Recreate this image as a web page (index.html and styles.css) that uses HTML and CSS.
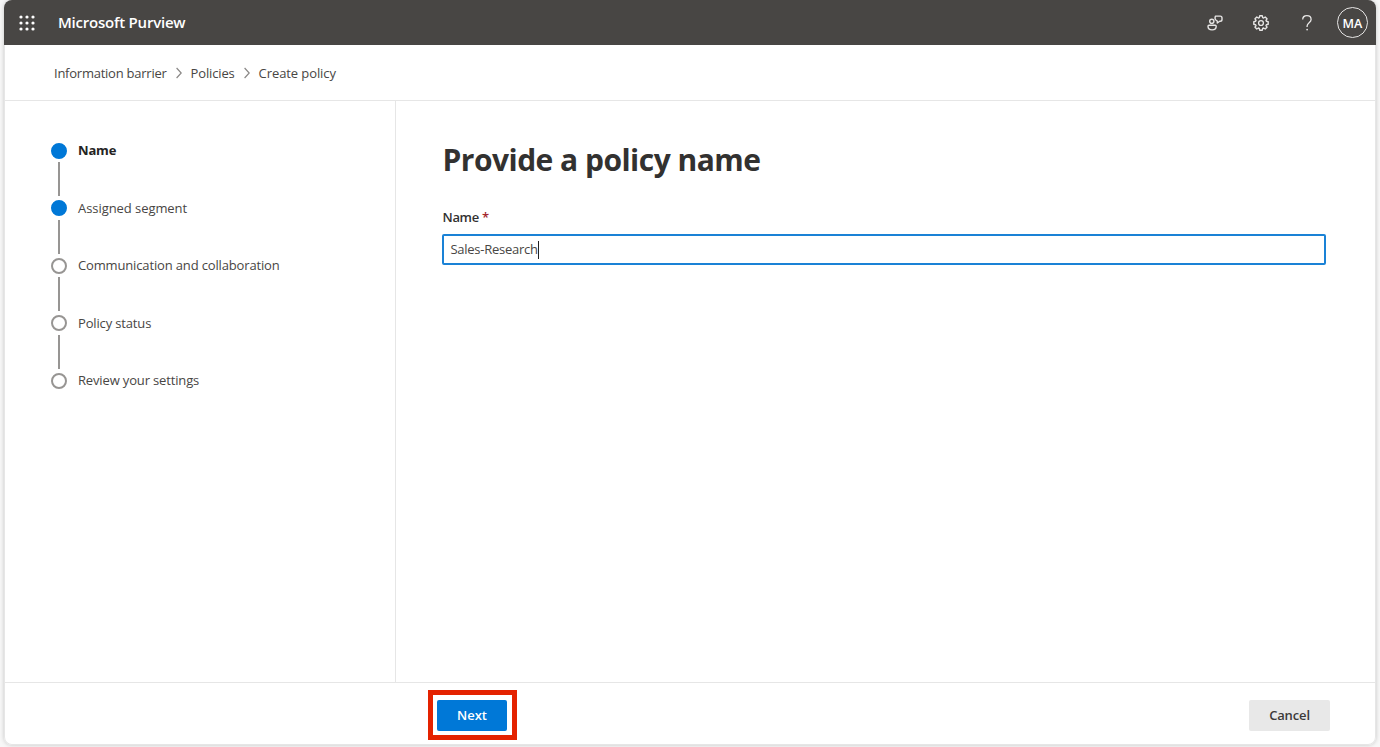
FILE: index.html
```html
<!DOCTYPE html>
<html lang="en">
<head>
<meta charset="utf-8">
<title>Microsoft Purview</title>
<link rel="stylesheet" href="styles.css">
</head>
<body>
<div class="frame">
  <header class="topbar">
    <svg class="waffle" width="16" height="16" viewBox="0 0 16 16" fill="#fff"><circle cx="2" cy="2" r="1.6"/><circle cx="8" cy="2" r="1.6"/><circle cx="14" cy="2" r="1.6"/><circle cx="2" cy="8" r="1.6"/><circle cx="8" cy="8" r="1.6"/><circle cx="14" cy="8" r="1.6"/><circle cx="2" cy="14" r="1.6"/><circle cx="8" cy="14" r="1.6"/><circle cx="14" cy="14" r="1.6"/></svg>
    <span class="brand">Microsoft Purview</span>
    <div class="tools">
      <svg width="16" height="16" viewBox="0 0 16 16" fill="none" stroke="#e6e5e4" stroke-width="1.4" stroke-linejoin="round"><circle cx="4.800" cy="6.300" r="2.100"/><path d="M2 10.200h6.200q1 0 1 1c0 2.400-1.700 3.700-4.100 3.700S1 13.600 1 11.200q0-1 1-1zM8.400 1.100h4.800q1.800 0 1.800 1.800v1.500q0 1.800-1.800 1.800h-.5L10.300 8V6.200Q8 5.200 8 3.200z"/></svg>
      <svg width="16" height="16" viewBox="-8 -8 16 16" fill="none" stroke="#e6e5e4" stroke-width="1.4" stroke-linejoin="round"><circle r="2.400"/><path d="M-1.300 -7.200H1.300L1.700 -5.400L2.600 -5L4.200 -6L6 -4.200L5 -2.600L5.400 -1.700L7.200 -1.300V1.300L5.400 1.700L5 2.600L6 4.200L4.200 6L2.600 5L1.700 5.400L1.300 7.200H-1.300L-1.700 5.400L-2.600 5L-4.200 6L-6 4.200L-5 2.600L-5.400 1.700L-7.200 1.300V-1.300L-5.400 -1.700L-5 -2.600L-6 -4.200L-4.200 -6L-2.600 -5L-1.700 -5.400Z"/></svg>
      <svg width="16" height="16" viewBox="0 0 16 16" fill="none" stroke="#e6e5e4" stroke-width="1.300"><path d="M3.700 4.400C3.700 2 5.500.7 7.900.7s4.200 1.500 4.200 3.700C12.100 7.600 8.100 7.800 8.100 11v1"/><circle cx="8.100" cy="14.600" r=".9" fill="#e6e5e4" stroke="none"/></svg>
      <span class="avatar">MA</span>
    </div>
  </header>
  <nav class="crumbs">
    <span class="crumb-a">Information barrier</span>
    <svg class="chev" width="6" height="12" viewBox="0 0 6 12"><path d="M.6 1L5.200 6L.6 11"/></svg>
    <span class="crumb-b">Policies</span>
    <svg class="chev" width="6" height="12" viewBox="0 0 6 12"><path d="M.6 1L5.200 6L.6 11"/></svg>
    <span class="crumb-c">Create policy</span>
  </nav>
  <div class="body">
    <aside class="steps">
      <div class="step"><i class="dot on"></i><b>Name</b></div>
      <div class="step step-segment"><i class="dot on"></i><span>Assigned segment</span></div>
      <div class="step"><i class="dot"></i><span>Communication and collaboration</span></div>
      <div class="step"><i class="dot"></i><span>Policy status</span></div>
      <div class="step"><i class="dot"></i><span>Review your settings</span></div>
    </aside>
    <main class="content">
      <h1>Provide a policy name</h1>
      <div class="label">Name <span class="req">*</span></div>
      <div class="field"><span class="value">Sales-Research</span><i class="caret"></i></div>
    </main>
  </div>
  <footer class="footer">
    <div class="highlight"><button class="next">Next</button></div>
    <button class="cancel">Cancel</button>
  </footer>
</div>
</body>
</html>
```
FILE: styles.css
```css
* { box-sizing: border-box; }
body { margin: 0; height: 747px; overflow: hidden; background: #f7f7f7; font: 13px/20px "Open Sans", "Noto Sans", sans-serif; color: #484644; }
.frame { display: flex; flex-direction: column; width: 1372px; height: 745px; margin-left: 4px; background: #fff; border-radius: 8px; overflow: hidden; box-shadow: inset 0 0 0 1px #e6e6e6, 0 0 4px rgba(0,0,0,.2); }
.topbar { display: flex; align-items: center; height: 45px; flex: none; background: #484644; padding: 0 8px 0 15px; color: #fff; }
.brand { margin: -1px 0 0 23px; font-size: 15px; font-weight: 600; letter-spacing: -.22px; }
.tools { display: flex; align-items: center; gap: 30px; margin-left: auto; }
.avatar { width: 31px; height: 31px; margin-left: -8px; border: 1px solid #e6e5e4; border-radius: 50%; font-size: 12.500px; font-weight: 600; line-height: 31px; text-align: center; }
.crumbs { display: flex; align-items: center; height: 56px; flex: none; padding-left: 50px; border-bottom: 1px solid #e6e6e6; }
.crumb-a { letter-spacing: -.24px; }
.crumb-b { letter-spacing: -.15px; }
.crumb-c { letter-spacing: -.09px; }
.chev { margin: 0 9px; fill: none; stroke: #8a8886; stroke-width: 1.200; }
.body { display: flex; flex: 1; }
.steps { width: 392px; padding: 39px 0 0 47px; border-right: 1px solid #e6e6e6; }
.step { display: flex; gap: 11px; height: 57.500px; line-height: 21px; letter-spacing: -.15px; }
.step-segment { letter-spacing: -.06px; }
.step b { color: #242322; }
.dot { display: flex; justify-content: center; width: 16px; height: 16px; margin-top: 2.500px; border: 2px solid #979593; border-radius: 50%; }
.dot.on { background: #0078d7; border-color: #0078d7; }
.step:not(:last-child) .dot::after { content: ""; flex: none; width: 2px; height: 34px; margin-top: 17.500px; background: #979593; }
.content { flex: 1; padding: 39px 50px 0 46.500px; }
h1 { margin: 0; font-size: 30px; line-height: 40px; font-weight: 700; letter-spacing: -.52px; color: #323130; }
.label { margin-top: 27px; font-weight: 600; letter-spacing: -.3px; color: #323130; }
.req { color: #a4262c; }
.field { display: flex; align-items: center; height: 31px; margin-top: 7px; margin-left: -.5px; padding-left: 6.500px; border: 2px solid #1a82d6; border-radius: 2px; }
.value { margin-top: -1px; letter-spacing: -.27px; }
.caret { width: 1px; height: 18px; background: #222; }
.footer { display: flex; align-items: center; justify-content: space-between; height: 63px; flex: none; padding: 2px 46px 0 424px; border-top: 1px solid #e6e6e6; }
button { border: 0; border-radius: 2px; font: 600 13px/20px "Open Sans", "Noto Sans", sans-serif; padding: 0; }
.highlight { display: flex; align-items: center; justify-content: center; width: 89px; height: 50px; border: 5px solid #e42200; }
.next { width: 70px; height: 31px; margin-right: 1px; background: #0078d7; color: #fff; }
.cancel { width: 81px; height: 31px; background: #e8e8e8; color: #3b3a39; letter-spacing: -.15px; }
```
